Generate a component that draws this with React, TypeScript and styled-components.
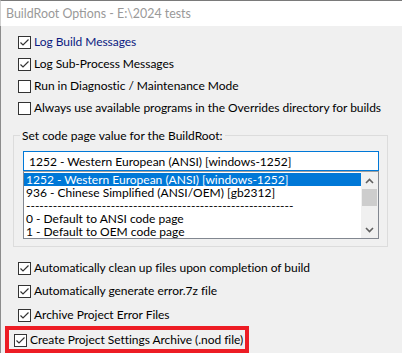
import React from "react";
import styled, { createGlobalStyle } from "styled-components";

const FONT = `"Segoe UI", Lato, "Liberation Sans", sans-serif`;

const Global = createGlobalStyle`
  html, body { margin: 0; padding: 0; background: #f0f0f0; }
  body { font-family: ${FONT}; font-size: 12px; color: #000; }
  * { box-sizing: border-box; }
`;

const Window = styled.div`
  width: 402px;
  height: 353px;
  display: flex;
  flex-direction: column;
  overflow: hidden;
  background: #f0f0f0;
`;

const TitleBar = styled.div`
  height: 26px;
  flex: none;
  display: flex;
  align-items: center;
  padding-left: 5px;
  background: #fff;
  border-top: 1px solid #7a7a7a;
  border-left: 1px solid #d0d0d0;
  color: #999999;
  font-size: 12.4px;
  white-space: pre;
`;

const Body = styled.div`
  flex: 1;
  display: flex;
  flex-direction: column;
  align-items: flex-start;
  padding: 9px 0 0 17px;
  border-left: 1px solid #8c8c8c;
`;

const Row = styled.label<{ $mt?: number }>`
  display: flex;
  align-items: center;
  height: 14px;
  margin-top: ${(p) => p.$mt ?? 0}px;
  gap: 3px;
  line-height: 14px;
  white-space: nowrap;
  letter-spacing: -0.04px;
`;

const RowText = styled.span<{ $focus?: boolean }>`
  color: ${(p) => (p.$focus ? "#0a1a80" : "#000")};
`;

const Box = styled.span`
  width: 13px;
  height: 13px;
  flex: none;
  border: 1px solid #333;
  background: #fff;
  display: inline-flex;
`;

const Check = ({ on }: { on: boolean }) => (
  <Box>
    {on && (
      <svg width="11" height="11" viewBox="0 0 11 11">
        <path d="M1.5 5.5 L4 8 L9.5 2.5" fill="none" stroke="#333" strokeWidth="1.2" />
      </svg>
    )}
  </Box>
);

const CheckRow = ({
  text,
  on,
  mt,
  focus,
}: {
  text: string;
  on: boolean;
  mt?: number;
  focus?: boolean;
}) => (
  <Row $mt={mt}>
    <Check on={on} />
    <RowText $focus={focus}>{text}</RowText>
  </Row>
);

const Group = styled.fieldset`
  margin: 13px 0 0 -5px;
  width: 375px;
  min-width: 0;
  border: 1px solid #dcdcdc;
  padding: 8px 8px 7px 9px;
  display: flex;
  flex-direction: column;
`;

const Legend = styled.legend`
  margin-left: -3px;
  padding: 0 2px;
  line-height: 15px;
`;

const Edit = styled.div`
  height: 20px;
  border: 1px solid #0078d7;
  background: #fff;
  padding-left: 5px;
  display: flex;
  align-items: center;
  white-space: nowrap;
`;

const List = styled.div`
  height: 68px;
  border: 1px solid #828790;
  border-top-color: #a0a0a0;
  background: #fff;
  display: flex;
  overflow: hidden;
`;

const Items = styled.div`
  flex: 1;
  padding-top: 1px;
  overflow: hidden;
`;

const Item = styled.div<{ $sel?: boolean }>`
  height: 13px;
  line-height: 13px;
  padding-left: 2px;
  white-space: nowrap;
  overflow: hidden;
  background: ${(p) => (p.$sel ? "#0078d7" : "transparent")};
  color: ${(p) => (p.$sel ? "#fff" : "#000")};
`;

const ScrollBar = styled.div`
  width: 17px;
  flex: none;
  background: #f0f0f0;
  display: flex;
  flex-direction: column;
  align-items: center;
`;

const Arrow = styled.div`
  height: 17px;
  width: 17px;
  display: flex;
  align-items: center;
  justify-content: center;
`;

const Thumb = styled.div`
  width: 15px;
  height: 17px;
  background: #cdcdcd;
`;

const Track = styled.div`
  flex: 1;
`;

const Chevron = ({ up }: { up?: boolean }) => (
  <svg width="9" height="6" viewBox="0 0 9 6">
    <path
      d={up ? "M1 5 L4.5 1.5 L8 5" : "M1 1 L4.5 4.5 L8 1"}
      fill="none"
      stroke="#606060"
      strokeWidth="1.6"
    />
  </svg>
);

const Highlight = styled.div`
  margin-top: 4px;
  margin-left: -13px;
  border: 4px solid #ed1c24;
  padding: 3px 2px 2px 5px;
  display: flex;
`;

export default function App() {
  return (
    <>
      <Global />
      <Window>
        <TitleBar>BuildRoot Options - E:\2024 tests</TitleBar>
        <Body>
          <CheckRow text="Log Build Messages" on focus />
          <CheckRow text="Log Sub-Process Messages" on mt={8} />
          <CheckRow text="Run in Diagnostic / Maintenance Mode" on={false} mt={8} />
          <CheckRow
            text="Always use available programs in the Overrides directory for builds"
            on={false}
            mt={8}
          />
          <Group>
            <Legend>Set code page value for the BuildRoot:</Legend>
            <Edit>1252 - Western European (ANSI) [windows-1252]</Edit>
            <List>
              <Items>
                <Item $sel>1252 - Western European (ANSI) [windows-1252]</Item>
                <Item>936 - Chinese Simplified (ANSI/OEM) [gb2312]</Item>
                <Item>{"-".repeat(60)}</Item>
                <Item>0 - Default to ANSI code page</Item>
                <Item>1 - Default to OEM code page</Item>
              </Items>
              <ScrollBar>
                <Arrow>
                  <Chevron up />
                </Arrow>
                <Thumb />
                <Track />
                <Arrow>
                  <Chevron />
                </Arrow>
              </ScrollBar>
            </List>
          </Group>
          <CheckRow text="Automatically clean up files upon completion of build" on mt={14} />
          <CheckRow text="Automatically generate error.7z file" on mt={9} />
          <CheckRow text="Archive Project Error Files" on mt={10} />
          <Highlight>
            <CheckRow text="Create Project Settings Archive (.nod file)" on />
          </Highlight>
        </Body>
      </Window>
    </>
  );
}
